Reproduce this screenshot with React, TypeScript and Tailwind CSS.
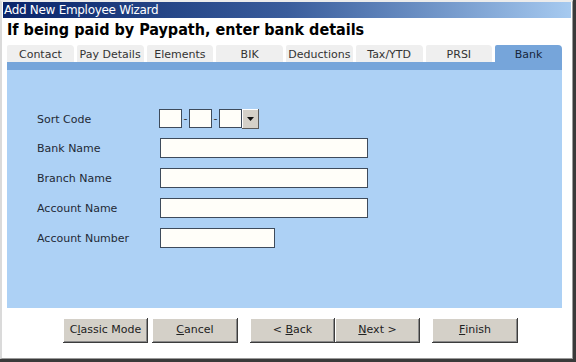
import React from "react";

const tabs = ["Contact", "Pay Details", "Elements", "BIK", "Deductions", "Tax/YTD", "PRSI", "Bank"];

function Btn({ w, children, cls = "" }: { w: string; children: React.ReactNode; cls?: string }) {
  return (
    <div
      className={`${w} ${cls} h-[25px] flex items-center justify-center bg-[#d4d0c8] text-[11px] text-[#222] whitespace-pre shadow-[inset_-1px_-1px_0_#3c3c3c,inset_1px_1px_0_#ffffff,inset_-2px_-2px_0_#8a8a8a]`}
    >
      {children}
    </div>
  );
}

function Field({ w }: { w: string }) {
  return <div className={`${w} h-[20px] border border-[#3e4b5b] bg-[#fffef9]`} />;
}

function Label({ children, w = "w-[123px]" }: { children: React.ReactNode; w?: string }) {
  return <div className={`${w} pt-[3px]`}>{children}</div>;
}

export default function App() {
  return (
    <div
      className="w-[576px] h-[362px] bg-white border-r-[3px] border-b-[3px] border-[#3a3a3a] overflow-hidden"
      style={{ fontFamily: "'DejaVu Sans', Verdana, sans-serif" }}
    >
      <div className="h-full flex flex-col border-t-2 border-l-2 border-r border-b border-t-[#ececec] border-l-[#dadada] border-r-[#9a9a9a] border-b-[#9a9a9a]">
        <div className="ml-[1px] mr-[1px] h-[16px] bg-linear-to-r from-[#0a246a] via-[#3a5d9c] to-[#a6caf0] flex items-center">
          <span className="pl-[1px] text-white text-[12px] leading-[16px] tracking-[-0.3px]">Add New Employee Wizard</span>
        </div>
        <div className="mt-[2px] pl-[5px] h-[20px] text-[16px] leading-[20px] font-bold text-black" style={{ fontFamily: "'DejaVu Sans Condensed', 'DejaVu Sans', sans-serif" }}>
          If being paid by Paypath, enter bank details
        </div>
        <div className="mt-[5px] ml-[5px] w-[555px] h-[17px] flex gap-[3px]">
          {tabs.map((t) => (
            <div
              key={t}
              className={`flex-1 rounded-tr-[4px] rounded-tl-[2px] text-[11px] leading-[19px] text-center ${
                t === "Bank" ? "bg-[#76a5da] text-[#16263c]" : "bg-[#efefef] text-[#333]"
              }`}
            >
              {t}
            </div>
          ))}
        </div>
        <div className="ml-[5px] w-[555px] h-[8px] bg-[#76a5da]" />
        <div className="ml-[5px] w-[555px] h-[238px] bg-[#add1f5] pt-[34px] pl-[30px] text-[11px] text-[#1f2a36]">
          <div className="h-[29px] flex items-center">
            <Label w="w-[122px]">Sort Code</Label>
            <div className="flex items-center">
              <div className="w-[23px] h-[19px] border border-[#3e4b5b] bg-[#fffef9]" />
              <div className="w-[7px] text-center text-[#333] leading-[19px]">-</div>
              <div className="w-[23px] h-[19px] border border-[#3e4b5b] bg-[#fffef9]" />
              <div className="w-[7px] text-center text-[#333] leading-[19px]">-</div>
              <div className="w-[23px] h-[19px] border border-[#3e4b5b] bg-[#fffef9]" />
              <div className="w-[17px] h-[20px] bg-[#d4d0c8] flex items-center justify-center shadow-[inset_-1px_-1px_0_#5a5a5a,inset_1px_1px_0_#ffffff]">
                <svg width="7" height="4" viewBox="0 0 7 4">
                  <polygon points="0,0 7,0 3.5,4" fill="#111" />
                </svg>
              </div>
            </div>
          </div>
          <div className="h-[30px] flex items-center">
            <Label>Bank Name</Label>
            <Field w="w-[208px]" />
          </div>
          <div className="h-[30px] flex items-center">
            <Label>Branch Name</Label>
            <Field w="w-[208px]" />
          </div>
          <div className="h-[30px] flex items-center">
            <Label>Account Name</Label>
            <Field w="w-[208px]" />
          </div>
          <div className="h-[30px] flex items-center">
            <Label>Account Number</Label>
            <Field w="w-[115px]" />
          </div>
        </div>
        <div className="mt-[10px] ml-[61px] flex">
          <Btn w="w-[85px]">
            C<span className="underline">l</span>assic Mode
          </Btn>
          <Btn w="w-[86px]" cls="ml-[4px]">
            <span className="underline">C</span>ancel
          </Btn>
          <Btn w="w-[85px]" cls="ml-[12px]">
            {"< "}
            <span className="underline">B</span>ack
          </Btn>
          <Btn w="w-[85px]">
            <span className="underline">N</span>
            {"ext >"}
          </Btn>
          <Btn w="w-[86px]" cls="ml-[12px]">
            <span className="underline">F</span>inish
          </Btn>
        </div>
      </div>
    </div>
  );
}
